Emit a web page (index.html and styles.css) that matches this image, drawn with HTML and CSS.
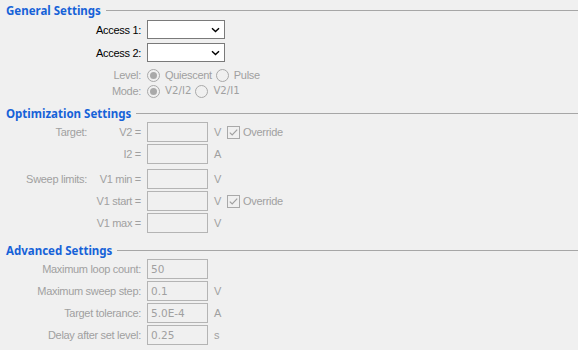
FILE: index.html
```html
<!DOCTYPE html>
<html>
<head>
<meta charset="utf-8">
<link rel="stylesheet" href="styles.css">
</head>
<body>
<div class="page">
  <div class="sec-head first"><span class="sec-title">General Settings</span><span class="rule"></span></div>
  <div class="gen-grid">
    <span class="lbl dark">Access 1:</span>
    <div class="select"><svg class="chev" width="9" height="6" viewBox="0 0 9 6"><path d="M1 1.2 L4.5 4.6 L8 1.2" fill="none" stroke="#000" stroke-width="1.4"/></svg></div>
    <span class="lbl dark">Access 2:</span>
    <div class="select"><svg class="chev" width="9" height="6" viewBox="0 0 9 6"><path d="M1 1.2 L4.5 4.6 L8 1.2" fill="none" stroke="#000" stroke-width="1.4"/></svg></div>
  </div>
  <div class="radio-grid">
    <span class="lbl">Level:</span>
    <div class="radios">
      <span class="radio on"></span><span class="rtext">Quiescent</span>
      <span class="radio"></span><span class="rtext">Pulse</span>
    </div>
    <span class="lbl">Mode:</span>
    <div class="radios">
      <span class="radio on"></span><span class="rtext mono">V2/I2</span>
      <span class="radio"></span><span class="rtext mono">V2/I1</span>
    </div>
  </div>

  <div class="sec-head"><span class="sec-title">Optimization Settings</span><span class="rule"></span></div>
  <div class="opt-grid">
    <span class="lbl">Target:</span><span class="lbl">V2 =</span><div class="field"></div><span class="unit">V</span>
    <div class="chk-wrap"><svg class="chk" width="13" height="13" viewBox="0 0 13 13"><rect x="0.5" y="0.5" width="12" height="12" fill="none" stroke="#a9a9a9"/><path d="M2.8 6.6 L5.2 9 L10.2 3.6" fill="none" stroke="#a0a0a0" stroke-width="1.2"/></svg><span class="rtext">Override</span></div>

    <span></span><span class="lbl">I2 =</span><div class="field"></div><span class="unit">A</span><span></span>

    <span class="lbl gap-top">Sweep limits:</span><span class="lbl gap-top">V1 min =</span><div class="field gap-top"></div><span class="unit gap-top">V</span><span class="gap-top"></span>

    <span></span><span class="lbl">V1 start =</span><div class="field"></div><span class="unit">V</span>
    <div class="chk-wrap"><svg class="chk" width="13" height="13" viewBox="0 0 13 13"><rect x="0.5" y="0.5" width="12" height="12" fill="none" stroke="#a9a9a9"/><path d="M2.8 6.6 L5.2 9 L10.2 3.6" fill="none" stroke="#a0a0a0" stroke-width="1.2"/></svg><span class="rtext">Override</span></div>

    <span></span><span class="lbl">V1 max =</span><div class="field"></div><span class="unit">V</span><span></span>
  </div>

  <div class="sec-head adv"><span class="sec-title">Advanced Settings</span><span class="rule"></span></div>
  <div class="adv-grid">
    <span class="lbl">Maximum loop count:</span><div class="field"><span class="val">50</span></div><span class="unit"></span>
    <span class="lbl">Maximum sweep step:</span><div class="field"><span class="val">0.1</span></div><span class="unit">V</span>
    <span class="lbl">Target tolerance:</span><div class="field"><span class="val">5.0E-4</span></div><span class="unit">A</span>
    <span class="lbl">Delay after set level:</span><div class="field"><span class="val">0.25</span></div><span class="unit">s</span>
  </div>
</div>
</body>
</html>
```
FILE: styles.css
```css
html, body {
  margin: 0;
  padding: 0;
  background: #f0f0f0;
}
.page {
  width: 578px;
  height: 350px;
  font-family: "Liberation Sans", Arial, sans-serif;
  font-size: 11px;
  letter-spacing: -0.3px;
  color: #a0a0a0;
  box-sizing: border-box;
  padding: 1px 0 0 0;
  overflow: hidden;
}
.sec-head {
  display: flex;
  align-items: center;
  height: 18px;
  padding-left: 6px;
}
.sec-title {
  font-family: "Noto Sans", sans-serif;
  font-weight: bold;
  color: #1662d8;
  font-size: 11.5px;
  letter-spacing: 0;
  white-space: nowrap;
}
.rule {
  flex: 1;
  height: 1px;
  background: #a6a6a6;
  margin-left: 5px;
  margin-top: 1px;
}
.lbl {
  text-align: right;
  white-space: nowrap;
  line-height: 16px;
}
.lbl.dark { color: #000; }
.gen-grid {
  display: grid;
  grid-template-columns: 141px 78px;
  column-gap: 6px;
  row-gap: 4px;
  align-items: center;
  margin-top: 1px;
}
.select {
  height: 19px;
  box-sizing: border-box;
  border: 1px solid #7a7a7a;
  background: #fff;
  display: flex;
  align-items: center;
  justify-content: flex-end;
  padding-right: 4px;
}
.chev { display: block; }
.radio-grid {
  display: grid;
  grid-template-columns: 141px auto;
  column-gap: 6px;
  row-gap: 0;
  align-items: center;
  margin-top: 5px;
}
.radios {
  display: flex;
  align-items: center;
  height: 16px;
}
.radio {
  width: 13px;
  height: 13px;
  box-sizing: border-box;
  border: 1px solid #a9a9a9;
  border-radius: 50%;
  background: #f0f0f0;
  position: relative;
  flex: none;
}
.radio.on::after {
  content: "";
  position: absolute;
  left: 2px;
  top: 2px;
  width: 7px;
  height: 7px;
  border-radius: 50%;
  background: #a9a9a9;
}
.rtext {
  margin-left: 5px;
  margin-right: 4px;
  white-space: nowrap;
  line-height: 16px;
}
.mono {
  font-family: "DejaVu Sans", sans-serif;
  font-size: 10.2px;
  letter-spacing: 0;
}
.sec-head:not(.first) { margin-top: 5px; }
.opt-grid {
  display: grid;
  grid-template-columns: 87px 54px 67px 19px auto;
  column-gap: 0;
  row-gap: 2px;
  align-items: center;
}
.field {
  width: 61px;
  margin-left: 6px;
  height: 20px;
  box-sizing: border-box;
  border: 1px solid #b4b4b4;
  background: #f0f0f0;
  display: flex;
  align-items: center;
  padding-left: 3px;
}
.unit {
  padding-left: 6px;
  line-height: 16px;
}
.gap-top { margin-top: 3px; }
.chk-wrap {
  display: flex;
  align-items: center;
}
.chk { display: block; flex: none; }
.chk-wrap .rtext { margin-left: 3px; }
.sec-head.adv { margin-top: 8px; }
.adv-grid {
  display: grid;
  grid-template-columns: 141px 67px auto;
  row-gap: 2px;
  align-items: center;
}
.val {
  font-family: "DejaVu Sans", sans-serif;
  font-size: 10.5px;
  letter-spacing: 0;
  color: #a0a0a0;
}
```
